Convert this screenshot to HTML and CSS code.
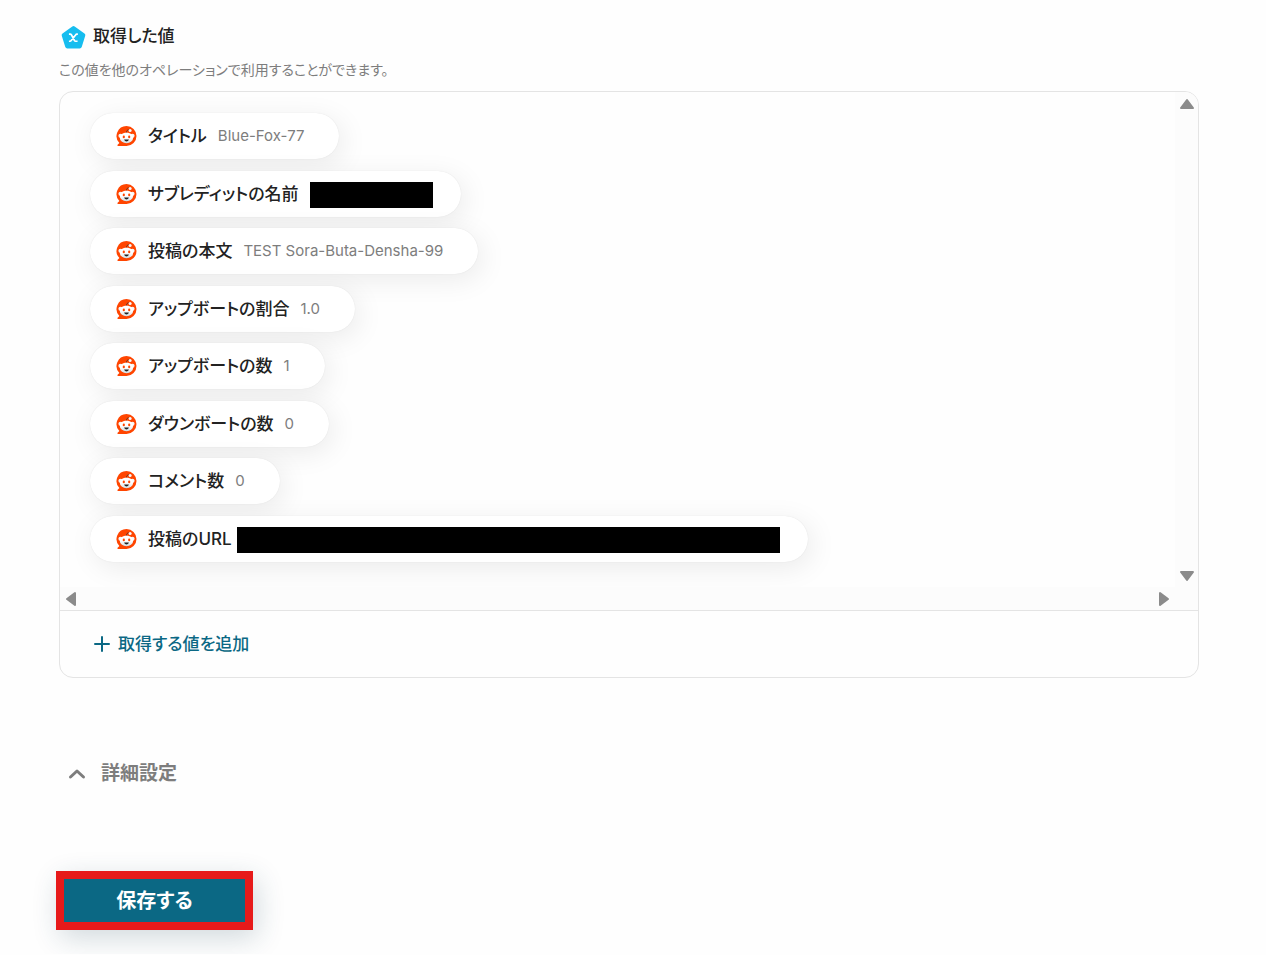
FILE: index.html
```html
<!DOCTYPE html>
<html lang="ja">
<head>
<meta charset="utf-8">
<meta name="viewport" content="width=device-width, initial-scale=1">
<title>取得した値</title>
<link rel="stylesheet" href="styles.css">
</head>
<body>
<svg width="0" height="0" class="sprite" aria-hidden="true">
  <defs>
    <linearGradient id="face" x1="0" y1="0" x2="0" y2="1">
      <stop offset="0.5" stop-color="#fff"/>
      <stop offset="1" stop-color="#cfdde3"/>
    </linearGradient>
    <symbol id="reddit" viewBox="0 0 20 20">
      <path fill="#ff4500" d="M10 0a10 10 0 1 1 0 20H1.600c-.7 0-1-.8-.5-1.300L2.900 17A10 10 0 0 1 10 0z"/>
      <circle cx="4" cy="9.800" r="2.100" fill="#f4f8fa"/>
      <circle cx="16" cy="9.800" r="2.100" fill="#f4f8fa"/>
      <ellipse cx="10" cy="11.800" rx="6.700" ry="5.400" fill="url(#face)"/>
      <path d="M9.900 6.400c0-1.500.9-2.400 2.300-2.600" fill="none" stroke="#333" stroke-width=".8"/>
      <circle cx="13.600" cy="4.400" r="1.500" fill="#f4f8fa"/>
      <ellipse cx="7.300" cy="10.900" rx="1.100" ry="1.300" fill="#ff4500"/>
      <ellipse cx="12.700" cy="10.900" rx="1.100" ry="1.300" fill="#ff4500"/>
      <path d="M7.600 13.600q2.400-.3 4.800 0c-.3 1.200-1.200 1.800-2.400 1.800s-2.100-.6-2.400-1.800z" fill="#222"/>
    </symbol>
  </defs>
</svg>
<main class="page">
  <header class="heading">
    <svg class="heading-icon" viewBox="0 0 26 26" aria-hidden="true">
      <path d="M13 4 22.400 10.700 19 21.500H7L3.600 10.700z" fill="#16bdef" stroke="#16bdef" stroke-width="4" stroke-linejoin="round"/>
      <path d="M8.600 9.800h1.200q.8 0 1.300.8l2.800 5.300q.4.700 1.200.7h1.800M17.200 9.800h-1q-.7 0-1.200.7l-4.200 5.400q-.5.700-1.200.7h-1" fill="none" stroke="#fff" stroke-width="1.600"/>
    </svg>
    <h1 class="title">取得した値</h1>
  </header>
  <p class="description">この値を他のオペレーションで利用することができます。</p>

  <section class="panel">
    <div class="viewport">
      <ul class="values">
        <li class="pill"><svg class="logo" aria-hidden="true"><use href="#reddit"/></svg><span class="label">タイトル</span><span class="value">Blue-Fox-77</span></li>
        <li class="pill pill-masked"><svg class="logo" aria-hidden="true"><use href="#reddit"/></svg><span class="label">サブレディットの名前</span><span class="mask mask-name"></span></li>
        <li class="pill"><svg class="logo" aria-hidden="true"><use href="#reddit"/></svg><span class="label">投稿の本文</span><span class="value">TEST Sora-Buta-Densha-99</span></li>
        <li class="pill"><svg class="logo" aria-hidden="true"><use href="#reddit"/></svg><span class="label">アップボートの割合</span><span class="value">1.0</span></li>
        <li class="pill"><svg class="logo" aria-hidden="true"><use href="#reddit"/></svg><span class="label">アップボートの数</span><span class="value">1</span></li>
        <li class="pill"><svg class="logo" aria-hidden="true"><use href="#reddit"/></svg><span class="label">ダウンボートの数</span><span class="value">0</span></li>
        <li class="pill"><svg class="logo" aria-hidden="true"><use href="#reddit"/></svg><span class="label">コメント数</span><span class="value">0</span></li>
        <li class="pill pill-masked"><svg class="logo" aria-hidden="true"><use href="#reddit"/></svg><span class="label">投稿のURL</span><span class="mask mask-url"></span></li>
      </ul>
      <div class="track track-vertical">
        <svg class="arrow" viewBox="0 0 16 12" aria-hidden="true"><path d="M8 2 14 10H2z"/></svg>
        <svg class="arrow" viewBox="0 0 16 12" aria-hidden="true"><path d="M8 10 14 2H2z"/></svg>
      </div>
      <div class="track track-horizontal">
        <svg class="arrow-side" viewBox="0 0 12 16" aria-hidden="true"><path d="M2 8 10 2V14z"/></svg>
        <svg class="arrow-side" viewBox="0 0 12 16" aria-hidden="true"><path d="M10 8 2 2V14z"/></svg>
      </div>
      <div class="track"></div>
    </div>
    <button class="add" type="button">
      <svg class="plus" viewBox="0 0 16 16" aria-hidden="true"><path d="M8 1V15M1 8H15"/></svg>
      取得する値を追加
    </button>
  </section>

  <button class="advanced" type="button" aria-expanded="false">
    <svg class="chevron" viewBox="0 0 18 12" aria-hidden="true"><path d="M2.500 9 9 3 15.500 9"/></svg>
    詳細設定
  </button>

  <button class="save" type="button">保存する</button>
</main>
</body>
</html>
```

FILE: styles.css
```css
* {
  box-sizing: border-box;
}

body {
  margin: 0;
  background: #fefefe;
  color: #222;
  font-family: Inter, "Noto Sans CJK JP", sans-serif;
  font-feature-settings: "palt";
}

button {
  font: inherit;
  font-feature-settings: inherit;
  border: 0;
  background: none;
  cursor: pointer;
}

.sprite {
  position: absolute;
}

.page {
  display: flex;
  flex-direction: column;
  align-items: flex-start;
  padding: 23px 67px 24px 59px;
}

.heading {
  display: flex;
  align-items: flex-start;
  gap: 6px;
  padding-left: 1px;
}

.heading-icon {
  width: 27px;
  height: 27px;
  margin-top: 1px;
}

.title {
  margin: 0;
  font-size: 17px;
  font-weight: 500;
  line-height: 26px;
}

.description {
  margin: 9px 0 11px;
  color: #7d7d7d;
  font-size: 14px;
  line-height: 20px;
}

.panel {
  align-self: stretch;
  overflow: hidden;
  border: 1px solid #e4e4e4;
  border-radius: 14px;
}

.viewport {
  display: grid;
  grid-template-columns: 1fr 23px;
  grid-template-rows: 495px 23px;
  border-bottom: 1px solid #e4e4e4;
}

.values {
  display: flex;
  flex-direction: column;
  align-items: flex-start;
  justify-content: space-between;
  margin: 0;
  padding: 21px 30px 25px;
  overflow: hidden;
  list-style: none;
}

.pill {
  display: flex;
  align-items: center;
  gap: 11px;
  height: 46px;
  padding: 0 35px 0 26px;
  border-radius: 24px;
  background: #fff;
  box-shadow: 0 0 1px rgba(0, 0, 0, 0.12), 4px 6px 28px rgba(0, 0, 0, 0.08);
  white-space: nowrap;
}

.pill-masked {
  padding-right: 28px;
}

.logo {
  width: 21px;
  height: 20px;
}

.label {
  font-size: 17px;
  font-weight: 500;
  line-height: 24px;
}

.value {
  color: #7d7d7d;
  font-size: 15px;
  line-height: 24px;
}

.mask {
  height: 26px;
  margin-top: 3px;
  background: #000;
}

.mask-name {
  width: 123px;
}

.mask-url {
  width: 543px;
  margin-left: -6px;
}

.track {
  display: flex;
  background: #fcfcfc;
}

.track-vertical {
  flex-direction: column;
  align-items: center;
  justify-content: space-between;
  padding: 6px 0 5px;
}

.track-horizontal {
  align-items: center;
  justify-content: space-between;
  padding: 0 5px;
}

.arrow,
.arrow-side {
  fill: #8b8b8b;
  stroke: #8b8b8b;
  stroke-width: 2;
  stroke-linejoin: round;
}

.arrow {
  width: 16px;
  height: 12px;
}

.arrow-side {
  width: 12px;
  height: 16px;
}

.add {
  display: flex;
  align-items: center;
  gap: 8px;
  padding: 20px 34px;
  color: #0b6884;
  font-size: 17px;
  font-weight: 500;
  line-height: 26px;
}

.plus {
  width: 16px;
  height: 16px;
  fill: none;
  stroke: currentColor;
  stroke-width: 2;
  stroke-linecap: round;
}

.advanced {
  display: flex;
  align-items: center;
  gap: 15px;
  margin-top: 81px;
  padding: 0 9px;
  color: #7d7d7d;
  font-size: 19px;
  font-weight: 600;
  line-height: 30px;
}

.chevron {
  width: 18px;
  height: 12px;
  fill: none;
  stroke: currentColor;
  stroke-width: 3;
  stroke-linecap: round;
  stroke-linejoin: round;
}

.save {
  min-width: 197px;
  margin: 82px 0 0 -3px;
  padding: 2px 6px 0;
  border: 8px solid #e71a1a;
  background: #0b6884;
  box-shadow: 4px 8px 28px rgba(30, 70, 90, 0.2);
  color: #fff;
  font-size: 20px;
  font-weight: 600;
  line-height: 41px;
}
```
